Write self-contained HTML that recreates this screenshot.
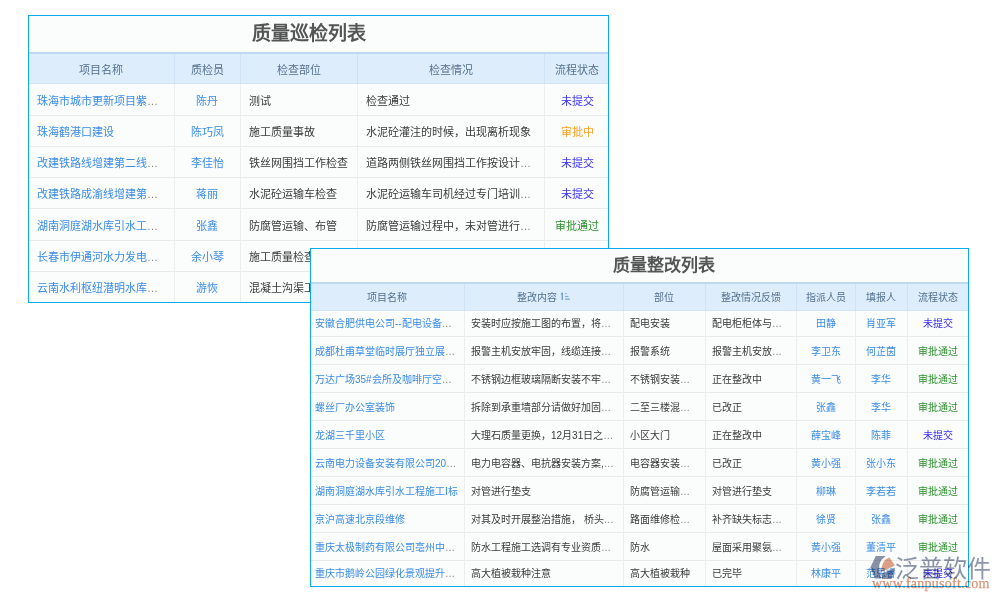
<!DOCTYPE html><html lang="zh-CN"><head><meta charset="utf-8"><style>

*{margin:0;padding:0;box-sizing:border-box}
html,body{width:1000px;height:600px;overflow:hidden;background:#fff}
body{position:relative;font-family:"Liberation Sans",sans-serif;}
.a{position:absolute}
.box{position:absolute;border:1px solid #0aaaf0;background:#fbfcfc}
.head{position:absolute;background:#deedfb;border-top:2px solid #bcd9f1;border-bottom:1px solid #d0e3f3}
.hl{position:absolute;background:#eaeaeb}
.vl{position:absolute;background:#ededee}
.hvl{position:absolute;background:#cde2f4}
.c{position:absolute;white-space:nowrap;overflow:hidden}
.t1 .c{font-size:11px}
.t2 .c{font-size:10px}
.h{color:#53708f;text-align:center}
.d{color:#3a3a3a}
.lk{color:#3a8ce6}
.ct{text-align:center}
.s0{color:#3a30f5}
.s1{color:#f9a11f}
.s2{color:#2b922b}
.el{color:#8c8580;position:relative;top:-0.5px}
.title{position:absolute;font-weight:bold;color:#555;white-space:nowrap}

</style></head><body>
<div class="t1">
<div class="box" style="left:28px;top:15px;width:581px;height:288px"></div>
<div class="title" style="left:252px;top:23.5px;font-size:19px;line-height:19px">质量巡检列表</div>
<div class="head" style="left:29px;top:52px;width:579px;height:32px"></div>
<div class="hvl" style="left:174px;top:54px;width:1px;height:29px"></div>
<div class="hvl" style="left:240px;top:54px;width:1px;height:29px"></div>
<div class="hvl" style="left:357px;top:54px;width:1px;height:29px"></div>
<div class="hvl" style="left:544px;top:54px;width:1px;height:29px"></div>
<div class="c h" style="left:28px;top:53.5px;width:146px;height:32px;line-height:32px">项目名称</div>
<div class="c h" style="left:174px;top:53.5px;width:66px;height:32px;line-height:32px">质检员</div>
<div class="c h" style="left:240px;top:53.5px;width:117px;height:32px;line-height:32px">检查部位</div>
<div class="c h" style="left:357px;top:53.5px;width:187px;height:32px;line-height:32px">检查情况</div>
<div class="c h" style="left:545px;top:53.5px;width:64px;height:32px;line-height:32px">流程状态</div>
<div class="hl" style="left:29px;top:115px;width:579px;height:1px"></div>
<div class="hl" style="left:29px;top:146px;width:579px;height:1px"></div>
<div class="hl" style="left:29px;top:177px;width:579px;height:1px"></div>
<div class="hl" style="left:29px;top:208px;width:579px;height:1px"></div>
<div class="hl" style="left:29px;top:240px;width:579px;height:1px"></div>
<div class="hl" style="left:29px;top:271px;width:579px;height:1px"></div>
<div class="vl" style="left:174px;top:84px;width:1px;height:218px"></div>
<div class="vl" style="left:240px;top:84px;width:1px;height:218px"></div>
<div class="vl" style="left:357px;top:84px;width:1px;height:218px"></div>
<div class="vl" style="left:544px;top:84px;width:1px;height:218px"></div>
<div class="c lk" style="left:37px;top:86px;width:137px;height:31px;line-height:31px">珠海市城市更新项目紫<span class="el">…</span></div>
<div class="c lk ct" style="left:174px;top:86px;width:66px;height:31px;line-height:31px">陈丹</div>
<div class="c d" style="left:249px;top:86px;width:108px;height:31px;line-height:31px">测试</div>
<div class="c d" style="left:366px;top:86px;width:178px;height:31px;line-height:31px">检查通过</div>
<div class="c s0 ct" style="left:545px;top:86px;width:64px;height:31px;line-height:31px">未提交</div>
<div class="c lk" style="left:37px;top:117px;width:137px;height:31px;line-height:31px">珠海鹤港口建设</div>
<div class="c lk ct" style="left:174px;top:117px;width:66px;height:31px;line-height:31px">陈巧凤</div>
<div class="c d" style="left:249px;top:117px;width:108px;height:31px;line-height:31px">施工质量事故</div>
<div class="c d" style="left:366px;top:117px;width:178px;height:31px;line-height:31px">水泥砼灌注的时候，出现离析现象</div>
<div class="c s1 ct" style="left:545px;top:117px;width:64px;height:31px;line-height:31px">审批中</div>
<div class="c lk" style="left:37px;top:148px;width:137px;height:31px;line-height:31px">改建铁路线增建第二线<span class="el">…</span></div>
<div class="c lk ct" style="left:174px;top:148px;width:66px;height:31px;line-height:31px">李佳怡</div>
<div class="c d" style="left:249px;top:148px;width:108px;height:31px;line-height:31px">铁丝网围挡工作检查</div>
<div class="c d" style="left:366px;top:148px;width:178px;height:31px;line-height:31px">道路两侧铁丝网围挡工作按设计<span class="el">…</span></div>
<div class="c s0 ct" style="left:545px;top:148px;width:64px;height:31px;line-height:31px">未提交</div>
<div class="c lk" style="left:37px;top:179px;width:137px;height:31px;line-height:31px">改建铁路成渝线增建第<span class="el">…</span></div>
<div class="c lk ct" style="left:174px;top:179px;width:66px;height:31px;line-height:31px">蒋丽</div>
<div class="c d" style="left:249px;top:179px;width:108px;height:31px;line-height:31px">水泥砼运输车检查</div>
<div class="c d" style="left:366px;top:179px;width:178px;height:31px;line-height:31px">水泥砼运输车司机经过专门培训<span class="el">…</span></div>
<div class="c s0 ct" style="left:545px;top:179px;width:64px;height:31px;line-height:31px">未提交</div>
<div class="c lk" style="left:37px;top:211px;width:137px;height:31px;line-height:31px">湖南洞庭湖水库引水工<span class="el">…</span></div>
<div class="c lk ct" style="left:174px;top:211px;width:66px;height:31px;line-height:31px">张鑫</div>
<div class="c d" style="left:249px;top:211px;width:108px;height:31px;line-height:31px">防腐管运输、布管</div>
<div class="c d" style="left:366px;top:211px;width:178px;height:31px;line-height:31px">防腐管运输过程中，未对管进行<span class="el">…</span></div>
<div class="c s2 ct" style="left:545px;top:211px;width:64px;height:31px;line-height:31px">审批通过</div>
<div class="c lk" style="left:37px;top:242px;width:137px;height:31px;line-height:31px">长春市伊通河水力发电<span class="el">…</span></div>
<div class="c lk ct" style="left:174px;top:242px;width:66px;height:31px;line-height:31px">余小琴</div>
<div class="c d" style="left:249px;top:242px;width:108px;height:31px;line-height:31px">施工质量检查</div>
<div class="c d" style="left:366px;top:242px;width:178px;height:31px;line-height:31px">施工质量检查通过</div>
<div class="c s2 ct" style="left:545px;top:242px;width:64px;height:31px;line-height:31px">审批通过</div>
<div class="c lk" style="left:37px;top:273px;width:137px;height:31px;line-height:31px">云南水利枢纽潜明水库<span class="el">…</span></div>
<div class="c lk ct" style="left:174px;top:273px;width:66px;height:31px;line-height:31px">游恢</div>
<div class="c d" style="left:249px;top:273px;width:108px;height:31px;line-height:31px">混凝土沟渠工程</div>
<div class="c d" style="left:366px;top:273px;width:178px;height:31px;line-height:31px">混凝土沟渠工程检查</div>
<div class="c s0 ct" style="left:545px;top:273px;width:64px;height:31px;line-height:31px">未提交</div>
</div>
<div class="t2">
<div class="box" style="left:310px;top:248px;width:659px;height:339px"></div>
<div class="title" style="left:613px;top:256.5px;font-size:17px;line-height:17px">质量整改列表</div>
<div class="head" style="left:311px;top:282px;width:657px;height:29px"></div>
<div class="hvl" style="left:464px;top:284px;width:1px;height:26px"></div>
<div class="hvl" style="left:623px;top:284px;width:1px;height:26px"></div>
<div class="hvl" style="left:705px;top:284px;width:1px;height:26px"></div>
<div class="hvl" style="left:796px;top:284px;width:1px;height:26px"></div>
<div class="hvl" style="left:855px;top:284px;width:1px;height:26px"></div>
<div class="hvl" style="left:907px;top:284px;width:1px;height:26px"></div>
<div class="c h" style="left:310px;top:284px;width:154px;height:28px;line-height:28px">项目名称</div>
<div class="c h" style="left:457px;top:284px;width:159px;height:28px;line-height:28px">整改内容</div>
<div class="c h" style="left:623px;top:284px;width:82px;height:28px;line-height:28px">部位</div>
<div class="c h" style="left:705px;top:284px;width:91px;height:28px;line-height:28px">整改情况反馈</div>
<div class="c h" style="left:796px;top:284px;width:59px;height:28px;line-height:28px">指派人员</div>
<div class="c h" style="left:855px;top:284px;width:52px;height:28px;line-height:28px">填报人</div>
<div class="c h" style="left:907px;top:284px;width:61px;height:28px;line-height:28px">流程状态</div>
<div class="hl" style="left:311px;top:336px;width:657px;height:1px"></div>
<div class="hl" style="left:311px;top:364px;width:657px;height:1px"></div>
<div class="hl" style="left:311px;top:392px;width:657px;height:1px"></div>
<div class="hl" style="left:311px;top:420px;width:657px;height:1px"></div>
<div class="hl" style="left:311px;top:448px;width:657px;height:1px"></div>
<div class="hl" style="left:311px;top:476px;width:657px;height:1px"></div>
<div class="hl" style="left:311px;top:504px;width:657px;height:1px"></div>
<div class="hl" style="left:311px;top:532px;width:657px;height:1px"></div>
<div class="hl" style="left:311px;top:560px;width:657px;height:1px"></div>
<div class="vl" style="left:464px;top:311px;width:1px;height:275px"></div>
<div class="vl" style="left:623px;top:311px;width:1px;height:275px"></div>
<div class="vl" style="left:705px;top:311px;width:1px;height:275px"></div>
<div class="vl" style="left:796px;top:311px;width:1px;height:275px"></div>
<div class="vl" style="left:855px;top:311px;width:1px;height:275px"></div>
<div class="vl" style="left:907px;top:311px;width:1px;height:275px"></div>
<div class="c lk" style="left:315px;top:310px;width:149px;height:28px;line-height:28px">安徽合肥供电公司--配电设备<span class="el">…</span></div>
<div class="c d" style="left:471px;top:310px;width:152px;height:28px;line-height:28px">安装时应按施工图的布置，将<span class="el">…</span></div>
<div class="c d" style="left:630px;top:310px;width:75px;height:28px;line-height:28px">配电安装</div>
<div class="c d" style="left:712px;top:310px;width:84px;height:28px;line-height:28px">配电柜柜体与<span class="el">…</span></div>
<div class="c lk ct" style="left:796px;top:310px;width:59px;height:28px;line-height:28px">田静</div>
<div class="c lk ct" style="left:855px;top:310px;width:52px;height:28px;line-height:28px">肖亚军</div>
<div class="c s0 ct" style="left:907px;top:310px;width:61px;height:28px;line-height:28px">未提交</div>
<div class="c lk" style="left:315px;top:338px;width:149px;height:28px;line-height:28px">成都杜甫草堂临时展厅独立展<span class="el">…</span></div>
<div class="c d" style="left:471px;top:338px;width:152px;height:28px;line-height:28px">报警主机安放牢固，线缆连接<span class="el">…</span></div>
<div class="c d" style="left:630px;top:338px;width:75px;height:28px;line-height:28px">报警系统</div>
<div class="c d" style="left:712px;top:338px;width:84px;height:28px;line-height:28px">报警主机安放<span class="el">…</span></div>
<div class="c lk ct" style="left:796px;top:338px;width:59px;height:28px;line-height:28px">李卫东</div>
<div class="c lk ct" style="left:855px;top:338px;width:52px;height:28px;line-height:28px">何芷茵</div>
<div class="c s2 ct" style="left:907px;top:338px;width:61px;height:28px;line-height:28px">审批通过</div>
<div class="c lk" style="left:315px;top:366px;width:149px;height:28px;line-height:28px">万达广场35#会所及咖啡厅空<span class="el">…</span></div>
<div class="c d" style="left:471px;top:366px;width:152px;height:28px;line-height:28px">不锈钢边框玻璃隔断安装不牢<span class="el">…</span></div>
<div class="c d" style="left:630px;top:366px;width:75px;height:28px;line-height:28px">不锈钢安装<span class="el">…</span></div>
<div class="c d" style="left:712px;top:366px;width:84px;height:28px;line-height:28px">正在整改中</div>
<div class="c lk ct" style="left:796px;top:366px;width:59px;height:28px;line-height:28px">黄一飞</div>
<div class="c lk ct" style="left:855px;top:366px;width:52px;height:28px;line-height:28px">李华</div>
<div class="c s2 ct" style="left:907px;top:366px;width:61px;height:28px;line-height:28px">审批通过</div>
<div class="c lk" style="left:315px;top:394px;width:149px;height:28px;line-height:28px">螺丝厂办公室装饰</div>
<div class="c d" style="left:471px;top:394px;width:152px;height:28px;line-height:28px">拆除到承重墙部分请做好加固<span class="el">…</span></div>
<div class="c d" style="left:630px;top:394px;width:75px;height:28px;line-height:28px">二至三楼混<span class="el">…</span></div>
<div class="c d" style="left:712px;top:394px;width:84px;height:28px;line-height:28px">已改正</div>
<div class="c lk ct" style="left:796px;top:394px;width:59px;height:28px;line-height:28px">张鑫</div>
<div class="c lk ct" style="left:855px;top:394px;width:52px;height:28px;line-height:28px">李华</div>
<div class="c s2 ct" style="left:907px;top:394px;width:61px;height:28px;line-height:28px">审批通过</div>
<div class="c lk" style="left:315px;top:422px;width:149px;height:28px;line-height:28px">龙湖三千里小区</div>
<div class="c d" style="left:471px;top:422px;width:152px;height:28px;line-height:28px">大理石质量更换，12月31日之<span class="el">…</span></div>
<div class="c d" style="left:630px;top:422px;width:75px;height:28px;line-height:28px">小区大门</div>
<div class="c d" style="left:712px;top:422px;width:84px;height:28px;line-height:28px">正在整改中</div>
<div class="c lk ct" style="left:796px;top:422px;width:59px;height:28px;line-height:28px">薛宝峰</div>
<div class="c lk ct" style="left:855px;top:422px;width:52px;height:28px;line-height:28px">陈菲</div>
<div class="c s0 ct" style="left:907px;top:422px;width:61px;height:28px;line-height:28px">未提交</div>
<div class="c lk" style="left:315px;top:450px;width:149px;height:28px;line-height:28px">云南电力设备安装有限公司20<span class="el">…</span></div>
<div class="c d" style="left:471px;top:450px;width:152px;height:28px;line-height:28px">电力电容器、电抗器安装方案,<span class="el">…</span></div>
<div class="c d" style="left:630px;top:450px;width:75px;height:28px;line-height:28px">电容器安装<span class="el">…</span></div>
<div class="c d" style="left:712px;top:450px;width:84px;height:28px;line-height:28px">已改正</div>
<div class="c lk ct" style="left:796px;top:450px;width:59px;height:28px;line-height:28px">黄小强</div>
<div class="c lk ct" style="left:855px;top:450px;width:52px;height:28px;line-height:28px">张小东</div>
<div class="c s2 ct" style="left:907px;top:450px;width:61px;height:28px;line-height:28px">审批通过</div>
<div class="c lk" style="left:315px;top:478px;width:149px;height:28px;line-height:28px">湖南洞庭湖水库引水工程施工I标</div>
<div class="c d" style="left:471px;top:478px;width:152px;height:28px;line-height:28px">对管进行垫支</div>
<div class="c d" style="left:630px;top:478px;width:75px;height:28px;line-height:28px">防腐管运输<span class="el">…</span></div>
<div class="c d" style="left:712px;top:478px;width:84px;height:28px;line-height:28px">对管进行垫支</div>
<div class="c lk ct" style="left:796px;top:478px;width:59px;height:28px;line-height:28px">柳琳</div>
<div class="c lk ct" style="left:855px;top:478px;width:52px;height:28px;line-height:28px">李若若</div>
<div class="c s2 ct" style="left:907px;top:478px;width:61px;height:28px;line-height:28px">审批通过</div>
<div class="c lk" style="left:315px;top:506px;width:149px;height:28px;line-height:28px">京沪高速北京段维修</div>
<div class="c d" style="left:471px;top:506px;width:152px;height:28px;line-height:28px">对其及时开展整治措施， 桥头<span class="el">…</span></div>
<div class="c d" style="left:630px;top:506px;width:75px;height:28px;line-height:28px">路面维修检<span class="el">…</span></div>
<div class="c d" style="left:712px;top:506px;width:84px;height:28px;line-height:28px">补齐缺失标志<span class="el">…</span></div>
<div class="c lk ct" style="left:796px;top:506px;width:59px;height:28px;line-height:28px">徐贤</div>
<div class="c lk ct" style="left:855px;top:506px;width:52px;height:28px;line-height:28px">张鑫</div>
<div class="c s2 ct" style="left:907px;top:506px;width:61px;height:28px;line-height:28px">审批通过</div>
<div class="c lk" style="left:315px;top:534px;width:149px;height:28px;line-height:28px">重庆太极制药有限公司亳州中<span class="el">…</span></div>
<div class="c d" style="left:471px;top:534px;width:152px;height:28px;line-height:28px">防水工程施工选调有专业资质<span class="el">…</span></div>
<div class="c d" style="left:630px;top:534px;width:75px;height:28px;line-height:28px">防水</div>
<div class="c d" style="left:712px;top:534px;width:84px;height:28px;line-height:28px">屋面采用聚氨<span class="el">…</span></div>
<div class="c lk ct" style="left:796px;top:534px;width:59px;height:28px;line-height:28px">黄小强</div>
<div class="c lk ct" style="left:855px;top:534px;width:52px;height:28px;line-height:28px">董清平</div>
<div class="c s2 ct" style="left:907px;top:534px;width:61px;height:28px;line-height:28px">审批通过</div>
<div class="c lk" style="left:315px;top:560px;width:149px;height:28px;line-height:28px">重庆市鹅岭公园绿化景观提升<span class="el">…</span></div>
<div class="c d" style="left:471px;top:560px;width:152px;height:28px;line-height:28px">高大植被栽种注意</div>
<div class="c d" style="left:630px;top:560px;width:75px;height:28px;line-height:28px">高大植被栽种</div>
<div class="c d" style="left:712px;top:560px;width:84px;height:28px;line-height:28px">已完毕</div>
<div class="c lk ct" style="left:796px;top:560px;width:59px;height:28px;line-height:28px">林康平</div>
<div class="c lk ct" style="left:855px;top:560px;width:52px;height:28px;line-height:28px">范思睿</div>
<div class="c s0 ct" style="left:907px;top:560px;width:61px;height:28px;line-height:28px">未提交</div>
</div>

<svg class="a" style="left:559px;top:291px" width="13" height="11" viewBox="0 0 13 11">
<rect x="2.6" y="1.6" width="1.4" height="7.4" fill="#6ea2d6"/>
<path d="M1.4,3.4 L3.3,1.2 L3.3,3.2 Z" fill="#6ea2d6"/>
<rect x="6" y="2" width="1.8" height="1.1" fill="#8db6e2"/>
<rect x="6" y="4.9" width="3.4" height="1.1" fill="#7aaadc"/>
<rect x="6" y="7.5" width="5" height="1.2" fill="#6ea2d6"/>
</svg>
<svg class="a" style="left:868px;top:555px;opacity:.9;mix-blend-mode:multiply" width="28" height="25" viewBox="0 0 28 25">
<path d="M7.8,1.1 L17.7,1.1 Q11.2,6 11.2,11.8 Q11.2,18 13.3,23.5 L6.9,23.5 L2.3,12.5 Z" fill="#7d879e"/>
<path d="M21.4,2.4 C16,4 13.3,9.5 13,17.3 L27,10.6 Z" fill="#dc977c"/>
<path d="M14,18.6 L27,13 L23.6,23.9 L14,23.9 Z" fill="#7d879e"/>
</svg>
<div class="a" style="left:895px;top:555px;font-size:24px;line-height:27px;color:#7a849c;opacity:.85;mix-blend-mode:multiply;white-space:nowrap">泛普软件</div>
<div class="a" style="left:872px;top:577px;font-family:'Liberation Serif',serif;font-size:14px;line-height:14px;color:#d98f70;opacity:.95;mix-blend-mode:multiply;white-space:nowrap;letter-spacing:0.25px;-webkit-text-stroke:0.25px #d98f70">www.fanpusoft.com</div>

</body></html>
